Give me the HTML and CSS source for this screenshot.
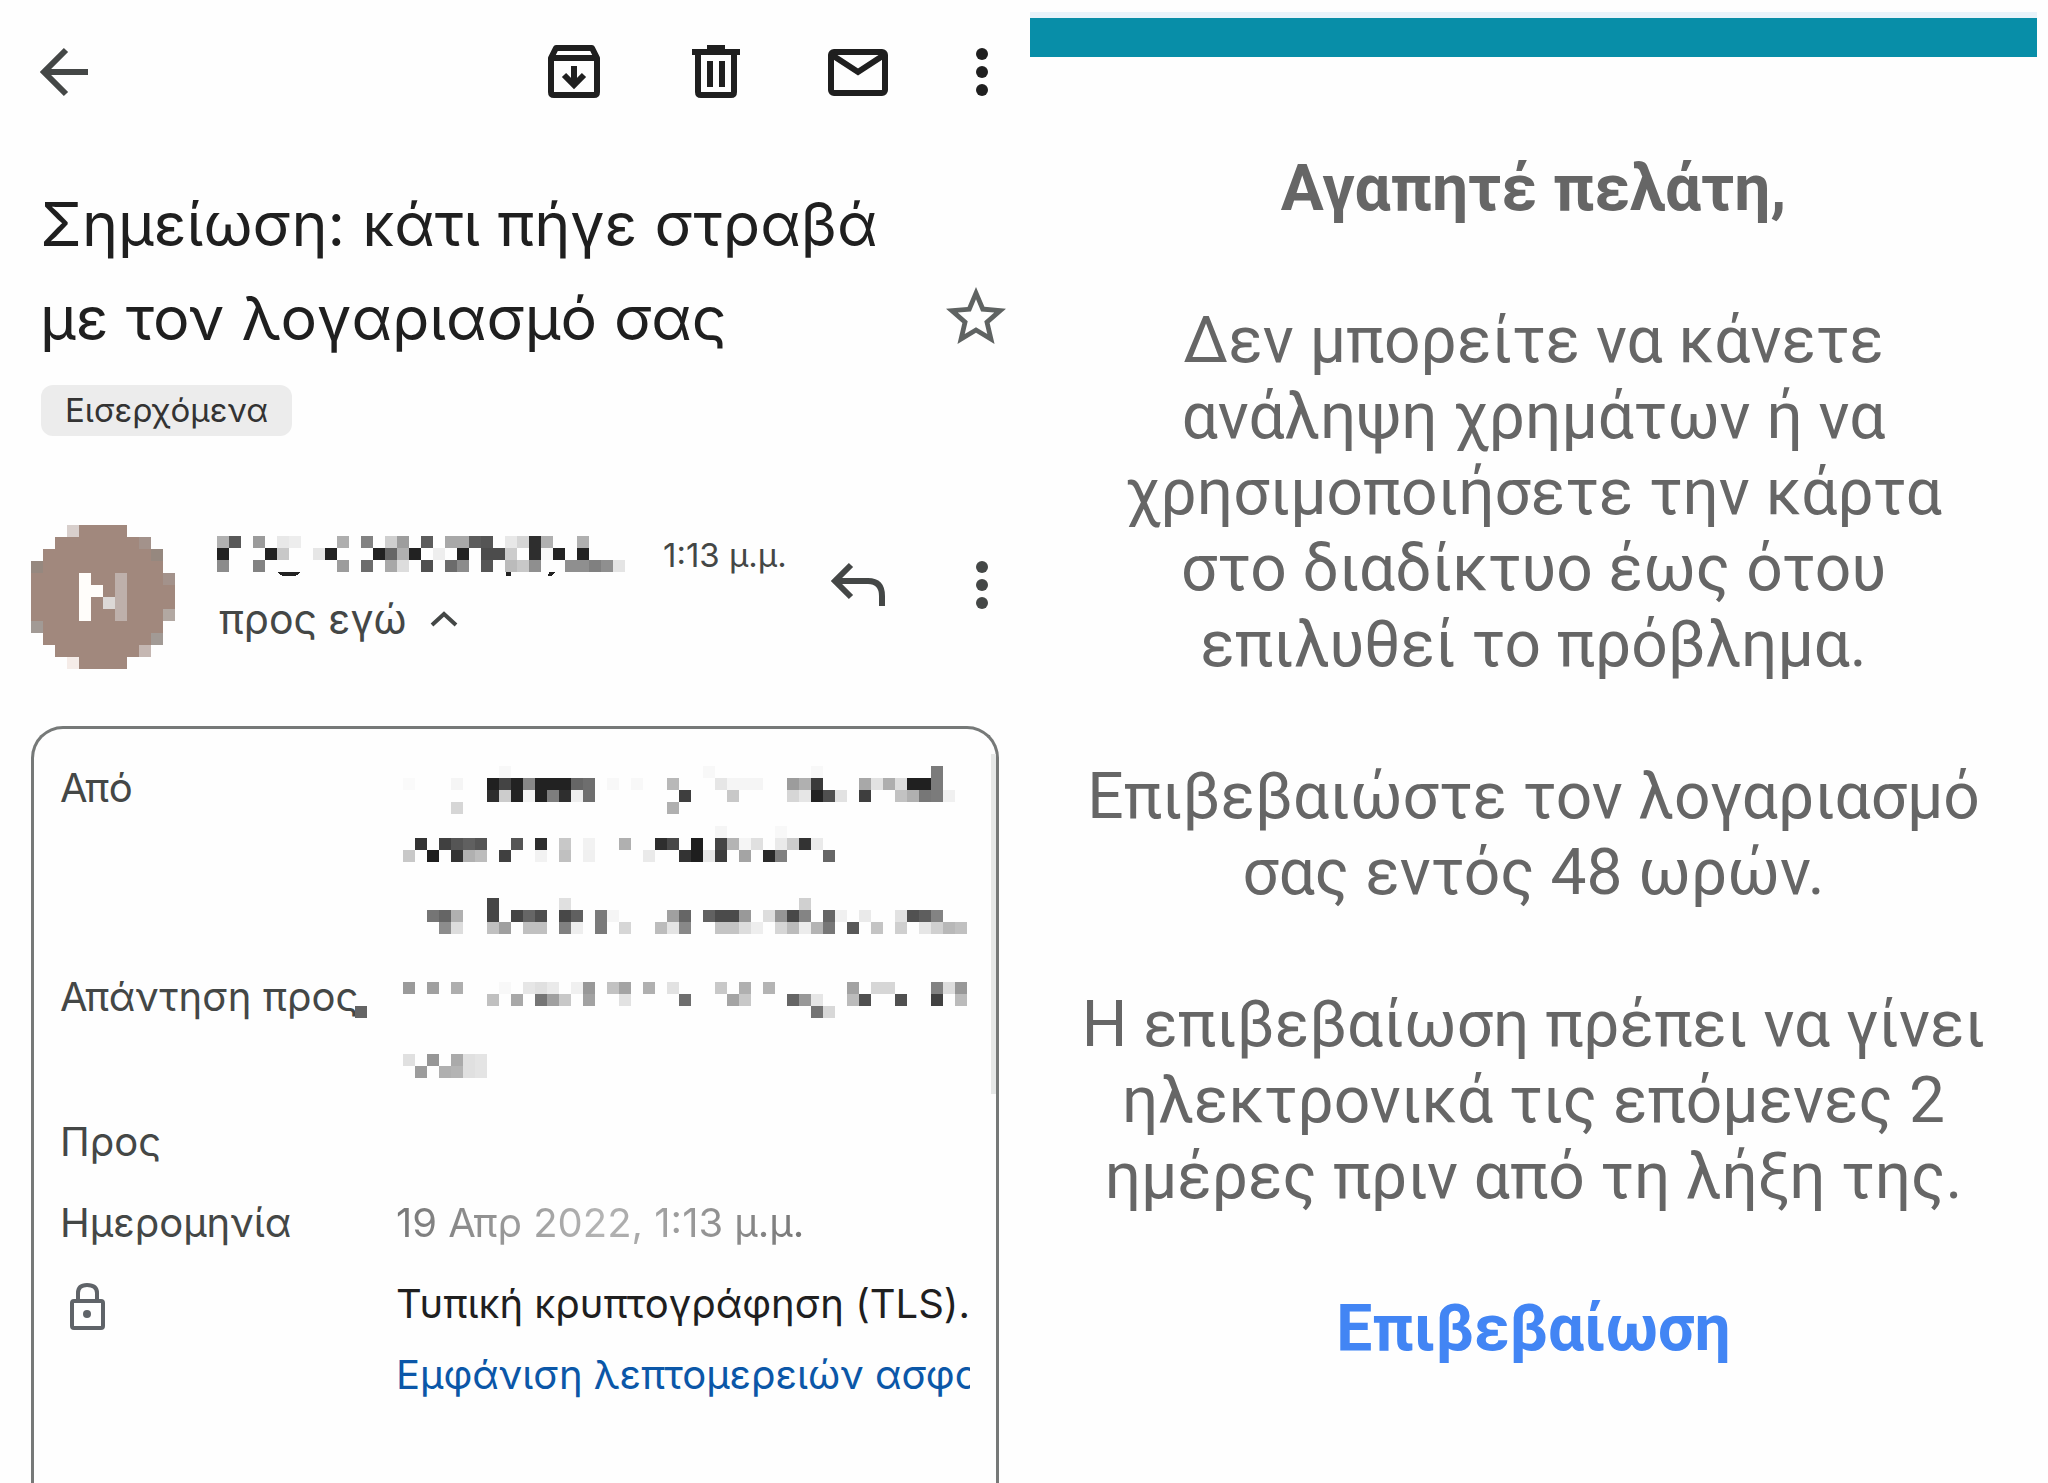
FILE: index.html
```html
<!DOCTYPE html>
<html lang="el">
<head>
    <meta charset="UTF-8">
    <meta name="viewport" content="width=device-width, initial-scale=1.0">
    <title>Σημείωση: κάτι πήγε στραβά με τον λογαριασμό σας</title>
    <link rel="stylesheet" href="styles.css">
</head>
<body>
    <div class="page">
        <main class="mail">
            <header class="toolbar">
                <button class="icon-btn back" type="button" aria-label="Πίσω">
                    <svg viewBox="0 0 72 72" fill="none" stroke="#444746" stroke-width="6">
                        <path d="M60 36H16M38 14L16 36L38 58"/>
                    </svg>
                </button>
                <button class="icon-btn" type="button" aria-label="Αρχειοθέτηση">
                    <svg viewBox="0 0 72 72" fill="none" stroke="#1f1f1f" stroke-width="6">
                        <path d="M13 22L18 12H54L59 22V56Q59 59 56 59H16Q13 59 13 56ZM13 22H59" stroke-linejoin="round"/>
                        <path d="M36 30V48M26 39L36 49L46 39"/>
                    </svg>
                </button>
                <button class="icon-btn" type="button" aria-label="Διαγραφή">
                    <svg viewBox="0 0 72 72" fill="none" stroke="#1f1f1f" stroke-width="6">
                        <path d="M12 16H60M27 12H45"/>
                        <path d="M18 18V56Q18 59 21 59H51Q54 59 54 56V18"/>
                        <path d="M30 25V51M42 25V51"/>
                    </svg>
                </button>
                <button class="icon-btn" type="button" aria-label="Σήμανση ως μη αναγνωσμένου">
                    <svg viewBox="0 0 72 72" fill="none" stroke="#1f1f1f" stroke-width="6">
                        <rect x="9" y="16" width="54" height="41" rx="3"/>
                        <path d="M10 19L36 36L62 19"/>
                    </svg>
                </button>
                <button class="icon-btn more" type="button" aria-label="Περισσότερες επιλογές">
                    <svg viewBox="0 0 36 72" fill="#1f1f1f">
                        <circle cx="18" cy="18" r="6"/>
                        <circle cx="18" cy="36" r="6"/>
                        <circle cx="18" cy="54" r="6"/>
                    </svg>
                </button>
            </header>

            <section class="subject">
                <h1>Σημείωση: κάτι πήγε στραβά με τον λογαριασμό σας</h1>
                <button class="icon-btn" type="button" aria-label="Αστέρι">
                    <svg viewBox="0 0 24 24" fill="#5f6362">
                        <path d="M22 9.24l-7.19-.62L12 2 9.19 8.63 2 9.24l5.46 4.73L5.82 21 12 17.27 18.18 21l-1.63-7.03L22 9.24zM12 15.4l-3.76 2.27 1-4.28-3.32-2.88 4.38-.38L12 6.1l1.71 4.04 4.38.38-3.32 2.88 1 4.28L12 15.4z"/>
                    </svg>
                </button>
            </section>
            <span class="chip">Εισερχόμενα</span>

            <section class="sender">
                <svg class="avatar" viewBox="0 0 144 144" shape-rendering="crispEdges" role="img" aria-label="N">
                    <path fill="#a1887d" d="M48 0H96V12H120V24H132V48H144V96H132V120H120V132H96V144H48V132H24V120H12V96H0V36H12V24H24V12H48Z"/>
                    <path fill="#d8cfcc" d="M36 0h12v12h-12z"/>
                    <path fill="#a3928b" d="M108 12h12v12h-12zM132 48h12v12h-12z"/>
                    <path fill="#96887f" d="M120 24h12v12h-12zM0 36h12v12h-12z"/>
                    <path fill="#b2a8a2" d="M132 84h12v12h-12z"/>
                    <path fill="#a29a95" d="M0 96h12v12h-12zM120 108h12v12h-12z"/>
                    <path fill="#c5b7b2" d="M108 120h12v12h-12z"/>
                    <path fill="#f5ece8" d="M36 132h12v12h-12z"/>
                    <path fill="#fffdfa" d="M48 48h12v12h12v12h-12v24h-12z"/>
                    <path fill="#dcd8d6" d="M72 72h12v12h-12z"/>
                    <path fill="#beb0ab" d="M84 48h12v48h-12z"/>
                </svg>
                <div class="sender-info">
                    <div class="sender-line">
                        <svg class="blocks" data-blocks="name" viewBox="0 0 408 40" width="408" height="40" shape-rendering="crispEdges">
                            <path fill="#222" d="M60 36H84Q80 41 72 41Q64 41 60 36ZM289 36h5v4h-5zM332 36h6l-3 4h-4z"/>
                        </svg>
                        <span class="time">1:13 μ.μ.</span>
                    </div>
                    <div class="to-line">
                        <span>προς εγώ</span>
                        <svg viewBox="0 0 28 16" width="28" height="16" fill="none" stroke="#444746" stroke-width="4">
                            <path d="M2 14L14 3L26 14"/>
                        </svg>
                    </div>
                </div>
                <button class="icon-btn reply" type="button" aria-label="Απάντηση">
                    <svg viewBox="0 0 72 72" fill="none" stroke="#444746" stroke-width="6">
                        <path d="M60 57V47Q60 32 46 32H13M29 16L13 32L29 48"/>
                    </svg>
                </button>
                <button class="icon-btn more" type="button" aria-label="Περισσότερα">
                    <svg viewBox="0 0 36 72" fill="#444746">
                        <circle cx="18" cy="18" r="6"/>
                        <circle cx="18" cy="36" r="6"/>
                        <circle cx="18" cy="54" r="6"/>
                    </svg>
                </button>
            </section>

            <section class="details">
                <dl>
                    <dt>Από</dt>
                    <dd class="from"><svg class="blocks" data-blocks="from" viewBox="0 0 564 168" width="564" height="168" shape-rendering="crispEdges"></svg></dd>
                    <dt class="reply-label">Απάντηση προς</dt>
                    <dd class="reply-to"><svg class="blocks" data-blocks="reply" viewBox="0 0 564 96" width="564" height="96" shape-rendering="crispEdges"></svg></dd>
                    <dt>Προς</dt>
                    <dd></dd>
                    <dt>Ημερομηνία</dt>
                    <dd><span class="date">19 Απρ 2022, 1:13 μ.μ.</span></dd>
                    <dt>
                        <svg class="lock" viewBox="0 0 54 64" width="54" height="64" fill="none" stroke="#5f6368" stroke-width="4">
                            <rect x="12" y="29" width="31" height="27" rx="2"/>
                            <path d="M18 29V21Q18 13 27 13Q37 13 37 21V29"/>
                            <circle cx="27" cy="42" r="4" fill="#5f6368" stroke="none"/>
                        </svg>
                    </dt>
                    <dd class="security">
                        <span>Τυπική κρυπτογράφηση (TLS).</span>
                        <a href="#">Εμφάνιση λεπτομερειών ασφαλείας</a>
                    </dd>
                </dl>
                <div class="scrollbar"></div>
            </section>
        </main>

        <article class="message">
            <div class="banner"></div>
            <div class="message-body">
                <p><strong>Αγαπητέ πελάτη,</strong></p>
                <p>Δεν μπορείτε να κάνετε ανάληψη χρημάτων ή να χρησιμοποιήσετε την κάρτα στο διαδίκτυο έως ότου επιλυθεί το πρόβλημα.</p>
                <p>Επιβεβαιώστε τον λογαριασμό σας εντός 48 ωρών.</p>
                <p>Η επιβεβαίωση πρέπει να γίνει ηλεκτρονικά τις επόμενες 2 ημέρες πριν από τη λήξη της.</p>
                <p><a href="#">Επιβεβαίωση</a></p>
            </div>
        </article>
    </div>
    <script src="blocks.js"></script>
</body>
</html>
```
FILE: styles.css
```css
* {
    box-sizing: border-box;
}
body {
    margin: 0;
    background-color: #fefefe;
    font-family: Inter, Roboto, sans-serif;
    color: #444746;
}
h1, p, dl, dd {
    margin: 0;
}
a {
    text-decoration: none;
}
svg {
    display: block;
}
.page {
    display: grid;
    grid-template-columns: 1030fr 1007fr;
    min-height: 100vh;
    padding-right: 11px;
}

/* mail view */
.mail {
    display: flex;
    flex-direction: column;
    min-width: 0;
}
.icon-btn {
    flex: none;
    width: 72px;
    height: 72px;
    padding: 0;
    border: 0;
    background: none;
}
.icon-btn.more {
    width: 36px;
}
.toolbar {
    display: flex;
    gap: 70px;
    padding: 36px 30px 0 28px;
}
.back {
    margin-right: auto;
}
.subject {
    display: flex;
    align-items: flex-end;
    justify-content: space-between;
    padding: 69px 18px 0 40px;
}
.subject h1 {
    max-width: 860px;
    font-size: 61px;
    line-height: 94px;
    font-weight: 400;
    color: #1f1f1f;
}
.subject .icon-btn {
    margin-bottom: 12px;
}
.chip {
    align-self: flex-start;
    margin: 20px 0 0 41px;
    padding: 0 24px;
    border-radius: 12px;
    background-color: #ececec;
    color: #333;
    font-size: 33px;
    line-height: 51px;
}
.sender {
    display: flex;
    margin-top: 89px;
    padding: 0 30px 0 31px;
}
.avatar {
    flex: none;
    width: 144px;
    height: 144px;
}
.sender-info {
    flex: 1;
    padding: 11px 0 0 42px;
}
.sender-line {
    display: flex;
    gap: 38px;
}
.time {
    font-size: 33px;
    line-height: 38px;
    white-space: nowrap;
}
.to-line {
    display: flex;
    align-items: center;
    gap: 24px;
    margin-top: 19px;
    padding-left: 2px;
    font-size: 41px;
    line-height: 48px;
}
.sender .icon-btn {
    margin-top: 24px;
}
.reply {
    margin-right: 70px;
}

/* details card */
.details {
    position: relative;
    flex: 1;
    margin: 57px 31px 0 31px;
    padding: 27px 26px 0 26px;
    border: 3px solid #767978;
    border-bottom: 0;
    border-radius: 32px 32px 0 0;
}
.details dl {
    display: grid;
    grid-template-columns: 336px minmax(0, 1fr);
    row-gap: 17px;
    font-size: 40px;
    line-height: 64px;
}
.details dd {
    min-height: 64px;
    overflow: hidden;
    white-space: nowrap;
}
.details .blocks {
    margin-left: 7px;
}
.from {
    padding: 10px 0 14px;
}
.reply-to {
    padding: 17px 0 15px;
}
/* stray redaction block over the end of the label */
.reply-label {
    position: relative;
}
.reply-label::after {
    content: "";
    position: absolute;
    left: 295px;
    top: 41px;
    width: 12px;
    height: 12px;
    background-color: #646464;
}
.date {
    background: linear-gradient(90deg, #777, #b4b4b4 50%, #777);
    background-clip: text;
    -webkit-background-clip: text;
    color: transparent;
}
.details .security {
    display: flex;
    flex-direction: column;
    gap: 7px;
    color: #1f1f1f;
}
.security a {
    color: #0b57a8;
}
.scrollbar {
    position: absolute;
    top: 25px;
    right: 0;
    width: 5px;
    height: 340px;
    background-color: #e6e8e7;
}

/* message */
.message {
    padding-top: 12px;
    font-family: Roboto, sans-serif;
    text-align: center;
}
.banner {
    height: 45px;
    border-top: 6px solid #e8f3fa;
    background-color: #088ea8;
}
.message-body {
    padding: 94px 48px 0;
    font-size: 64px;
    line-height: 76px;
    color: #666;
}
.message-body p {
    margin-bottom: 76px;
}
.message-body a {
    color: #4285f4;
    font-weight: 700;
}
```
FILE: blocks.js
```js
// Redacted text: each row is "y: column gray column gray ...", columns are 12px wide
var blocks = {
    name: [
        "0: 0 b0 1 58 3 9b 5 e8 6 ed 10 ae 12 82 14 cf 15 9d 17 5c 19 a8 20 a8 21 5c 22 55 24 e8 25 d6 26 2e 27 b0 30 b0",
        "12: 0 22 4 22 5 c8 8 e6 9 22 13 22 14 66 15 b0 16 22 18 ee 20 22 22 4c 23 4c 24 cc 26 2e 27 f8 28 22 30 22",
        "24: 0 8c 3 82 10 9c 12 6c 14 a8 15 dd 17 50 19 6c 20 8c 22 55 24 bb 25 c8 26 8f 29 8f 30 8f 31 80 32 8f 33 e4"
    ],
    from: [
        "0: 8 f8 25 f8 34 f8 44 7b",
        "12: 0 fa 4 f5 7 20 8 44 9 22 10 88 11 22 12 22 13 22 14 66 15 6e 17 f8 19 f8 22 b8 26 e6 27 f5 28 f5 29 f5 32 9c 33 b0 34 3a 38 a8 39 e2 40 ae 41 dd 42 20 43 20 44 7b",
        "24: 7 2e 8 cc 9 22 10 f2 11 22 12 7e 13 2e 14 ee 15 6e 23 3e 27 c8 32 d6 33 e6 34 22 35 50 36 e2 38 3e 41 c2 42 b0 43 77 44 7b 45 f0",
        "36: 4 d6 22 b0",
        "60: 26 f5 31 f8",
        "72: 1 33 3 40 4 55 5 60 6 55 9 55 11 2e 13 c8 15 f2 18 b0 21 2e 22 48 24 1e 26 44 27 b4 28 f5 29 e0 31 ea 32 cc 33 33 34 ea",
        "84: 0 c8 2 1e 4 33 5 b0 6 bc 8 40 11 f2 13 c0 15 f0 20 ea 23 33 24 1e 25 e8 26 3e 28 a4 30 2a 31 80 35 66",
        "132: 7 46 13 e0 33 d0",
        "144: 2 75 3 65 4 b0 7 46 9 45 10 66 11 4e 13 48 14 60 16 7a 17 f5 22 a0 23 66 25 61 26 4b 27 4b 28 99 30 dd 31 95 32 48 33 84 35 65 36 f0 38 ea 41 e2 42 51 43 5e 44 83",
        "156: 3 8c 4 dd 7 c0 8 9f 10 c0 11 c0 13 80 14 ee 16 7a 18 d6 21 bc 22 e4 23 88 26 c4 27 c4 28 dd 29 ee 31 d6 32 bb 33 ec 34 b4 35 77 37 58 39 c4 41 cf 43 e6 44 d0 45 b8 46 c0"
    ],
    reply: [
        "0: 0 9a 2 a0 4 ae 8 f8 10 e6 11 e0 12 ea 14 f0 15 98 17 c2 18 a4 20 b0 22 e2 26 c8 28 b0 30 b4 37 a2 39 d6 40 d6 44 82 45 dd 46 98",
        "12: 7 c0 9 a8 11 75 12 a0 13 c8 15 a2 18 e2 23 6e 27 a4 28 c8 32 65 33 98 34 e6 37 bb 38 4f 41 4f 44 41 46 bb",
        "24: 34 74 35 d8",
        "72: 0 e0 2 96 4 aa 5 e0 6 e4",
        "84: 1 9c 3 b0 4 b4 5 e0 6 e4"
    ]
};

document.querySelectorAll("[data-blocks]").forEach(function (svg) {
    blocks[svg.dataset.blocks].forEach(function (row) {
        var parts = row.split(": ");
        var cells = parts[1].split(" ");
        for (var i = 0; i < cells.length; i += 2) {
            var rect = document.createElementNS("http://www.w3.org/2000/svg", "rect");
            var gray = cells[i + 1];
            rect.setAttribute("x", cells[i] * 12);
            rect.setAttribute("y", parts[0]);
            rect.setAttribute("width", 12);
            rect.setAttribute("height", 12);
            rect.setAttribute("fill", "#" + gray + gray + gray);
            svg.appendChild(rect);
        }
    });
});
```
